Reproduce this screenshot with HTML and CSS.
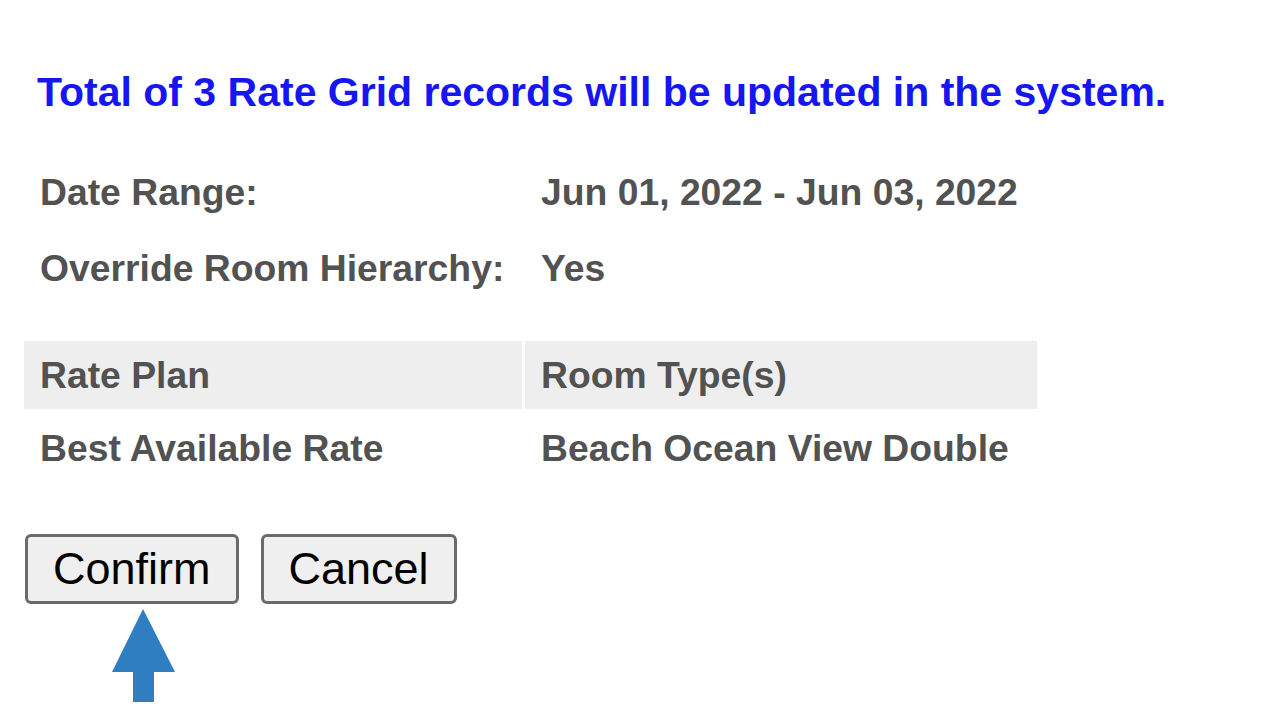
FILE: index.html
```html
<!DOCTYPE html>
<html lang="en">
<head>
  <meta charset="UTF-8">
  <title>Rate Grid Update</title>
  <link rel="stylesheet" href="styles.css">
</head>
<body>
  <div class="page">
    <h2 class="summary">Total of 3 Rate Grid records will be updated in the system.</h2>

    <div class="info">
      <div class="info-label">Date Range:</div>
      <div class="info-value">Jun 01, 2022 - Jun 03, 2022</div>
      <div class="info-label">Override Room Hierarchy:</div>
      <div class="info-value">Yes</div>
    </div>

    <table class="records">
      <thead>
        <tr>
          <th>Rate Plan</th>
          <th>Room Type(s)</th>
        </tr>
      </thead>
      <tbody>
        <tr>
          <td>Best Available Rate</td>
          <td>Beach Ocean View Double</td>
        </tr>
      </tbody>
    </table>

    <div class="buttons">
      <button class="btn">Confirm</button>
      <button class="btn">Cancel</button>
    </div>

    <div class="pointer">
      <svg width="64" height="94" viewBox="0 0 64 94">
        <polygon points="31,0 63,63 42,63 42,93 21,93 21,63 0,63" fill="#2f7ec1"/>
      </svg>
    </div>
  </div>
</body>
</html>
```

FILE: styles.css
```css
body {
  margin: 0;
  padding: 0;
  background-color: #ffffff;
  font-family: "Liberation Sans", Arial, sans-serif;
}
.page {
  padding: 68px 0 0 24px;
}
.summary {
  margin: 0 0 38px 13px;
  font-size: 41px;
  line-height: 48px;
  font-weight: bold;
  color: #1616f2;
}
.info {
  display: grid;
  grid-template-columns: 502px auto;
  width: 1013px;
  font-size: 37.3px;
  font-weight: bold;
  color: #525252;
}
.info-label, .info-value {
  line-height: 76px;
  padding-left: 16px;
}
.info-value {
  padding-left: 15px;
}
.records {
  margin-top: 35px;
  width: 1013px;
  border-collapse: separate;
  border-spacing: 0;
  font-size: 37.3px;
  font-weight: bold;
  color: #525252;
}
.records th {
  background-color: #eeeeee;
  text-align: left;
  height: 68px;
  padding: 0 0 0 16px;
  font-weight: bold;
}
.records th:first-child {
  width: 482px;
  border-right: 3px solid #ffffff;
}
.records td {
  height: 78px;
  padding: 0 0 0 16px;
}
.buttons {
  display: flex;
  gap: 22px;
  margin-top: 47px;
  padding-left: 1px;
}
.btn {
  height: 70px;
  padding: 0 25px;
  font-family: "Liberation Sans", Arial, sans-serif;
  font-size: 45px;
  color: #000000;
  background-color: #efefef;
  border: 3px solid #6a6a6a;
  border-radius: 6px;
}
.pointer {
  padding: 5px 0 0 88px;
}
.pointer svg {
  display: block;
}
```
